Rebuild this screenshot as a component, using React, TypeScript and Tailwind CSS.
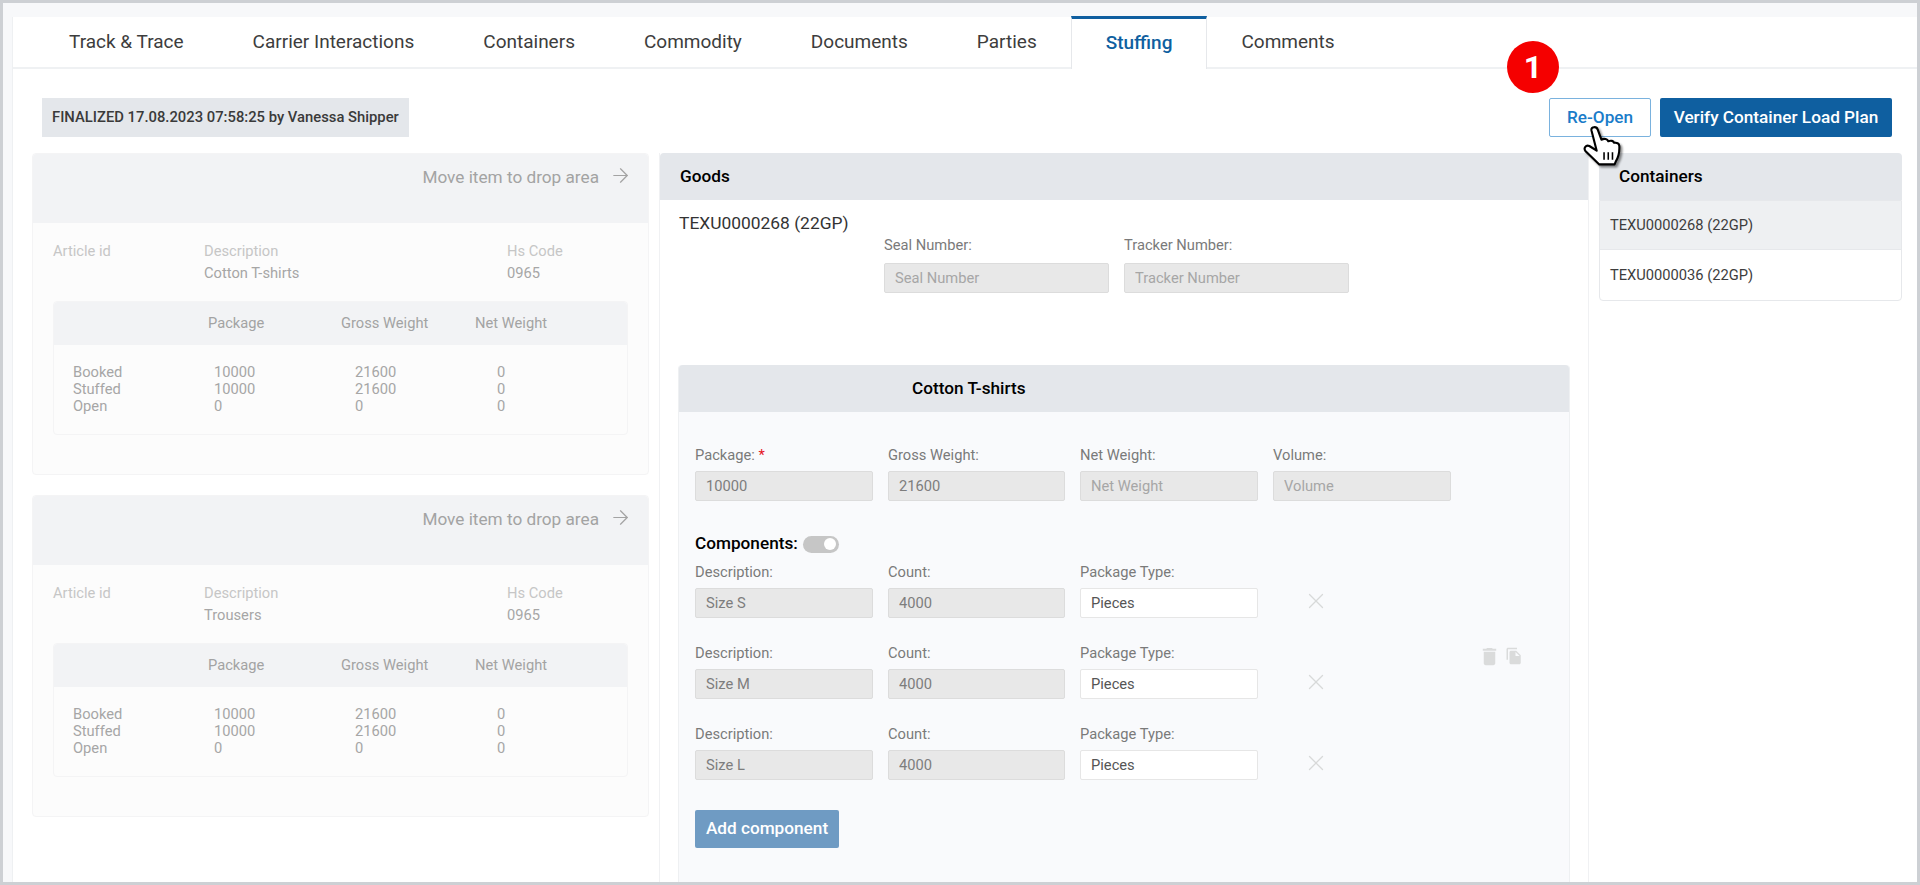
import { ArrowRight, X } from 'lucide-react';
import { MdDelete, MdFileCopy } from 'react-icons/md';

const tabs = ['Track & Trace', 'Carrier Interactions', 'Containers', 'Commodity', 'Documents', 'Parties', 'Stuffing', 'Comments'];

const articles = [
  { name: 'Cotton T-shirts', marginTop: 'mt-0' },
  { name: 'Trousers', marginTop: 'mt-[20px]' },
];

const qtyRows = [
  ['Booked', '10000', '21600', '0'],
  ['Stuffed', '10000', '21600', '0'],
  ['Open', '0', '0', '0'],
];

const components = ['Size S', 'Size M', 'Size L'];

function Field({ label, value, placeholder, required, white, labelHeight = 'h-[24px]' }: { label: string; value?: string; placeholder?: string; required?: boolean; white?: boolean; labelHeight?: string }) {
  return (
    <div className="w-full">
      <div className={`${labelHeight} text-[14.7px] leading-[16px] text-[#7a7a7a]`}>
        {label}
        {required && <span className="text-[#e5141f]"> *</span>}
      </div>
      <input
        readOnly
        value={value ?? ''}
        placeholder={placeholder}
        className={
          white
            ? 'w-full h-[30px] px-[10px] text-[14.7px] rounded-[2px] border border-[#e6e6e6] bg-white text-[#555] outline-none'
            : 'w-full h-[30px] px-[10px] text-[14.7px] rounded-[2px] border border-[#dcdcdc] bg-[#e8e8e8] text-[#7d7d7d] placeholder:text-[#a6a6a6] outline-none'
        }
      />
    </div>
  );
}

function ArticleCard({ name, marginTop }: { name: string; marginTop: string }) {
  return (
    <div className={`${marginTop} h-[322px] rounded-[4px] border border-[#f4f4f5] bg-[#fcfcfc]`}>
      <div className="h-[69px] rounded-t-[4px] bg-[#f2f3f5] pt-[13px] pr-[16px] flex justify-end gap-[10px] text-[17.200px] leading-[20px] text-[#a3a3a3]">
        <span>Move item to drop area</span>
        <ArrowRight className="w-[23px] h-[23px] -mt-[3px]" strokeWidth={1.300} />
      </div>
      <div className="px-[20px] pt-[17px]">
        <div className="grid grid-cols-[151px_303px_1fr] text-[14.7px] leading-[22px]">
          <div className="text-[#c6c6c6]">Article id</div>
          <div className="text-[#c6c6c6]">Description</div>
          <div className="text-[#c6c6c6]">Hs Code</div>
          <div />
          <div className="text-[#a6a6a6]">{name}</div>
          <div className="text-[#a6a6a6]">0965</div>
        </div>
        <div className="mt-[17px] h-[134px] rounded-[4px] border border-[#f4f4f5]">
          <div className="h-[43px] rounded-t-[4px] bg-[#f2f3f5] grid grid-cols-[154px_133px_134px_1fr] text-[14.7px] leading-[43px] text-[#a3a3a3]">
            <div />
            <div>Package</div>
            <div>Gross Weight</div>
            <div>Net Weight</div>
          </div>
          <div className="pt-[19px] pl-[19px] text-[14.7px] leading-[17px] text-[#a6a6a6]">
            {qtyRows.map((r) => (
              <div key={r[0]} className="grid grid-cols-[141px_141px_142px_1fr]">
                {r.map((c, i) => (
                  <div key={i}>{c}</div>
                ))}
              </div>
            ))}
          </div>
        </div>
      </div>
    </div>
  );
}

function HandCursor() {
  return (
    <svg viewBox="0 0 38 38" className="absolute left-[1580px] top-[123px] w-[40px] h-[40px] drop-shadow-[2px_2px_1px_rgba(0,0,0,0.45)]">
      <path
        d="M8 4c-.5-3.500 5-4 6-.5L17.500 13c3-1.500 5.500-.5 6.500 1.500 2.500-1 5-.5 5.500 1.500 2.500-.5 5 .5 5 3 .3 5-.5 10-3.500 15l-1 2.500H15.500L2.500 24c-2.500-3 .5-6.500 3.500-5l7 4.500Z"
        fill="#fff"
        stroke="#000"
        strokeWidth="2"
        strokeLinejoin="round"
      />
      <path d="M20 25v7M24 25v7M28 25v7" stroke="#000" strokeWidth="1.500" fill="none" />
    </svg>
  );
}

export default function App() {
  return (
    <div className="relative w-[1920px] h-[885px] overflow-hidden border-[3px] border-[#cdd0d4] bg-[#f7f8fa] pt-[14px] pl-[9px] font-['Roboto',sans-serif]">
      <div className="h-full bg-white border-l border-[#eef0f2]">
        {/* tabs */}
        <div className="h-[52px] border-b-2 border-[#eff1f3] flex pl-[21.500px]">
          {tabs.map((t) =>
            t === 'Stuffing' ? (
              <div key={t} className="h-[53px] -mt-px px-[33.500px] bg-white border-t-[3px] border-x border-t-[#0f5fa0] border-x-[#e6e8eb] text-[19px] font-medium leading-[48px] text-[#0f5fa0]">
                {t}
              </div>
            ) : (
              <div key={t} className="px-[34.500px] text-[19px] leading-[50px] text-[#3d3d3d]">
                {t}
              </div>
            ),
          )}
        </div>

        {/* status + actions */}
        <div className="mt-[29px] h-[39px] flex justify-between pl-[29px] pr-[25px]">
          <div className="bg-[#e4e7eb] px-[10px] text-[14.800px] font-medium leading-[39px] text-[#3a3a3a]">
            FINALIZED 17.08.2023 07:58:25 by Vanessa Shipper
          </div>
          <div className="flex gap-[9px]">
            <button className="w-[102px] rounded-[2px] border border-[#7ab2de] bg-white text-[17.200px] font-medium text-[#1a7cc9]">Re-Open</button>
            <button className="w-[232px] rounded-[2px] bg-[#0f5fa0] text-[17.200px] font-medium text-white">Verify Container Load Plan</button>
          </div>
        </div>

        {/* columns */}
        <div className="mt-[16px] flex pl-[19px] h-[729px]">
          <div className="w-[617px]">
            {articles.map((a) => (
              <ArticleCard key={a.name} name={a.name} marginTop={a.marginTop} />
            ))}
          </div>

          <div className="ml-[10px] w-[930px] border-x border-[#f0f1f3] bg-white">
            <div className="h-[47px] rounded-t-[4px] bg-[#e4e7eb] pl-[20px] text-[17.200px] font-medium leading-[47px] text-black">Goods</div>
            <div className="pl-[19px] pt-[13px] text-[17.400px] leading-[20px] text-[#333]">TEXU0000268 (22GP)</div>
            <div className="ml-[224px] mt-[4px] flex gap-[15px]">
              <div className="w-[225px]"><Field label="Seal Number:" placeholder="Seal Number" labelHeight="h-[26px]" /></div>
              <div className="w-[225px]"><Field label="Tracker Number:" placeholder="Tracker Number" labelHeight="h-[26px]" /></div>
            </div>
            <div className="mx-[18px] mt-[72px] h-[600px] rounded-t-[4px] border-x border-[#eef0f2] bg-[#f9fafc]">
              <div className="h-[47px] rounded-t-[4px] bg-[#e4e7eb] pl-[233px] text-[17.200px] font-medium leading-[47px] text-black">Cotton T-shirts</div>
              <div className="relative pl-[16px] pt-[35px]">
                <div className="grid grid-cols-[178px_177px_178px_178px] gap-x-[15px]">
                  <Field label="Package:" value="10000" required />
                  <Field label="Gross Weight:" value="21600" />
                  <Field label="Net Weight:" placeholder="Net Weight" />
                  <Field label="Volume:" placeholder="Volume" />
                </div>
                <div className="mt-[34px] h-[18px] flex items-center gap-[5px] text-[17.200px] font-medium text-black">
                  Components:
                  <span className="w-[36px] h-[17px] rounded-full bg-[#c6c6c6] flex items-center justify-end pr-[3px]">
                    <span className="w-[12px] h-[12px] rounded-full bg-white" />
                  </span>
                </div>
                <div className="mt-[11px] flex flex-col gap-[27px]">
                  {components.map((c) => (
                    <div key={c} className="grid grid-cols-[178px_177px_178px_1fr] gap-x-[15px]">
                      <Field label="Description:" value={c} />
                      <Field label="Count:" value="4000" />
                      <Field label="Package Type:" value="Pieces" white />
                      <div className="pt-[24px] pl-[30px]">
                        <X className="w-[26px] h-[26px] text-[#d8d9d9]" strokeWidth={1.200} />
                      </div>
                    </div>
                  ))}
                </div>
                <button className="mt-[30px] block w-[144px] h-[38px] rounded-[2px] bg-[#6f9bc3] text-[17.200px] font-medium text-white">Add component</button>
                <div className="absolute left-[799px] top-[233px] flex items-start gap-[4px] text-[#dadbdb]">
                  <MdDelete className="w-[23px] h-[23px]" />
                  <MdFileCopy className="w-[18px] h-[18px] mt-[2px]" />
                </div>
              </div>
            </div>
          </div>

          <div className="ml-[10px] w-[303px]">
            <div className="h-[47px] rounded-t-[4px] bg-[#e4e7eb] pl-[20px] text-[17.200px] font-medium leading-[47px] text-black">Containers</div>
            <div className="rounded-b-[4px] border border-[#e6e8eb] text-[14.7px] text-[#3d3d3d]">
              <div className="h-[49px] bg-[#eef0f2] border-b border-[#e6e8eb] pl-[10px] leading-[48px]">TEXU0000268 (22GP)</div>
              <div className="h-[50px] pl-[10px] leading-[50px]">TEXU0000036 (22GP)</div>
            </div>
          </div>
        </div>
      </div>

      {/* callout badge */}
      <div className="absolute left-[1504px] top-[38px] w-[52px] h-[52px] rounded-full bg-[#f50000] text-center text-[32px] font-bold leading-[52px] text-white">1</div>
      <HandCursor />
    </div>
  );
}
